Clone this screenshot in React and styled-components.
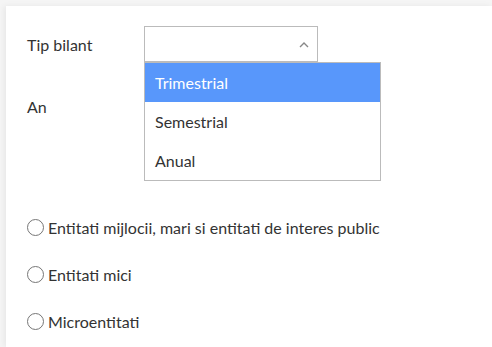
import React from "react";
import styled, { createGlobalStyle } from "styled-components";

const GlobalStyle = createGlobalStyle`
  body {
    margin: 0;
    background: #f5f5f5;
    font-family: Lato, "Liberation Sans", sans-serif;
    color: #333;
  }
`;

const Card = styled.div`
  margin: 6px 0 0 6px;
  min-height: 341px;
  background: #fff;
  box-shadow: -2px 0 6px rgba(0, 0, 0, 0.06);
  padding: 20px 0 0 21px;
  box-sizing: border-box;
`;

const Row = styled.div`
  display: flex;
  align-items: center;
  margin-bottom: ${props => props.gap || 0}px;
`;

const Label = styled.div`
  width: 117px;
  font-size: 16px;
`;

const SelectWrap = styled.div`
  position: relative;
`;

const SelectBox = styled.div`
  width: 174px;
  height: 36px;
  box-sizing: border-box;
  border: 1px solid #bbb;
  display: flex;
  align-items: center;
  justify-content: flex-end;
  padding-right: 8px;
  background: #fff;
`;

const Dropdown = styled.ul`
  position: absolute;
  top: 36px;
  left: 0;
  width: 237px;
  margin: 0;
  padding: 0;
  list-style: none;
  border: 1px solid #bbb;
  background: #fff;
  box-sizing: border-box;
  z-index: 2;
`;

const Option = styled.li`
  height: 39px;
  display: flex;
  align-items: center;
  padding-left: 10px;
  font-size: 16px;
  background: ${props => (props.active ? "#5897fb" : "#fff")};
  color: ${props => (props.active ? "#fff" : "#333")};
`;

const Radios = styled.div`
  display: flex;
  flex-direction: column;
  gap: 29px;
  margin-top: 94px;
`;

const RadioLabel = styled.label`
  display: flex;
  align-items: center;
  font-size: 16px;
  height: 18px;
`;

const Circle = styled.span`
  width: 15px;
  height: 15px;
  border: 1px solid #767676;
  border-radius: 50%;
  margin-right: 4px;
  flex-shrink: 0;
`;

const Chevron = () => (
  <svg width="10" height="7" viewBox="0 0 10 7">
    <path d="M1 6 L5 2 L9 6" fill="none" stroke="#888" strokeWidth="1.4" />
  </svg>
);

const App = () => {
  return (
    <>
      <GlobalStyle />
      <Card>
        <Row gap={26}>
          <Label>Tip bilant</Label>
          <SelectWrap>
            <SelectBox>
              <Chevron />
            </SelectBox>
            <Dropdown>
              <Option active>Trimestrial</Option>
              <Option>Semestrial</Option>
              <Option>Anual</Option>
            </Dropdown>
          </SelectWrap>
        </Row>
        <Row>
          <Label>An</Label>
          <SelectBox />
        </Row>
        <Radios>
          <RadioLabel>
            <Circle />
            Entitati mijlocii, mari si entitati de interes public
          </RadioLabel>
          <RadioLabel>
            <Circle />
            Entitati mici
          </RadioLabel>
          <RadioLabel>
            <Circle />
            Microentitati
          </RadioLabel>
        </Radios>
      </Card>
    </>
  );
};

export default App;
